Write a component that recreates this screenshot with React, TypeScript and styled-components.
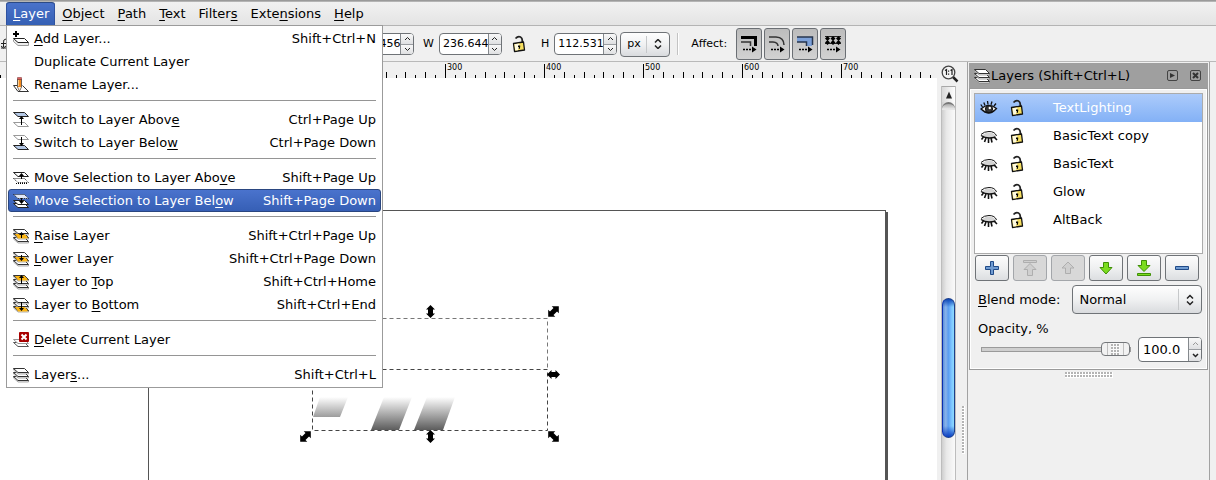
import React, { ReactNode, useEffect, useState } from "react";
import styled, { createGlobalStyle, css } from "styled-components";

const GlobalStyle = createGlobalStyle`
  * { box-sizing: border-box; }
  body {
    margin: 0;
    background: #f0f0f0;
    color: #000;
    font-family: "DejaVu Sans", sans-serif;
    font-size: 13px;
    line-height: 16px;
  }
  button, input, select { font: inherit; color: inherit; margin: 0; padding: 0; }
  svg { display: block; flex: none; }
  u { text-underline-offset: 2px; text-decoration-thickness: 1px; text-decoration-skip-ink: none; }
`;

const Window = styled.div`
  display: flex;
  flex-direction: column;
  min-height: 100vh;
  border-top: 1px solid #9a9a9a;
  overflow: hidden;
`;

const MenuBar = styled.nav`
  display: flex;
  height: 25px;
  padding: 0 6px;
  background: linear-gradient(#f1f1f1, #e4e4e4);
  border-top: 1px solid #b4b4b4;
  border-bottom: 1px solid #b4b4b4;
`;

const MenuSlot = styled.div`
  position: relative;
`;

const MenuTitle = styled.button<{ $open?: boolean }>`
  display: block;
  height: 23px;
  padding: 0 6px 0 7px;
  border: 1px solid transparent;
  border-width: 1px 0 0;
  border-radius: 3px 3px 0 0;
  background: none;
  ${(p) =>
    p.$open &&
    css`
      color: #fff;
      background: linear-gradient(#4a72ca, #3560b4);
      border-color: #2c4a85;
      box-shadow: inset 1px 0 #2f52a0, inset -1px 0 #2f52a0;
    `}
`;

const Menu = styled.div`
  position: absolute;
  top: 23px;
  left: 0;
  z-index: 5;
  width: 377px;
  padding: 1px 1px 1px;
  background: #fff;
  border: 1px solid #9b9b9b;
`;

const MenuItem = styled.button<{ $active?: boolean }>`
  display: flex;
  align-items: center;
  gap: 5px;
  width: 100%;
  height: 23px;
  padding: 0 4px;
  border: 1px solid transparent;
  border-radius: 3px;
  background: none;
  text-align: left;
  white-space: nowrap;
  ${(p) =>
    p.$active &&
    css`
      color: #fff;
      background: linear-gradient(#4a73cd, #365fb5);
      border-color: #2a4680;
    `}
`;

const ItemLabel = styled.span`
  flex: 1;
`;

const Separator = styled.hr`
  height: 1px;
  margin: 4px 5px 7px;
  border: 0;
  background: #959595;
`;

const ToolBar = styled.div`
  display: flex;
  align-items: center;
  height: 36px;
  padding-top: 1px;
  border-bottom: 1px solid #b9b9b9;
  background: #f0f0f0;
  font-size: 11px;
`;

const Field = styled.label`
  display: flex;
  align-items: center;
  gap: 5px;
`;

const Spin = styled.span<{ $large?: boolean }>`
  display: flex;
  width: ${(p) => (p.$large ? 64 : 63)}px;
  height: ${(p) => (p.$large ? 25 : 22)}px;
  border: 1px solid #6f7377;
  border-radius: 4px;
  background: #fff;
  overflow: hidden;
  font-size: ${(p) => (p.$large ? 13 : 11)}px;
  input {
    flex: 1;
    min-width: 0;
    padding-left: ${(p) => (p.$large ? 4 : 3)}px;
    border: 0;
    background: none;
    outline: 0;
  }
`;

const Steppers = styled.span`
  display: flex;
  flex-direction: column;
  width: 13px;
  border-left: 1px solid #85898d;
  background: #eee;
`;

const Stepper = styled.button`
  display: flex;
  flex: 1;
  align-items: center;
  justify-content: center;
  border: 0;
  background: linear-gradient(#f8f8f8, #dfe0e2);
  & + & { border-top: 1px solid #9a9da1; }
`;

const Drop = styled.span<{ $large?: boolean }>`
  display: flex;
  align-items: center;
  flex: ${(p) => (p.$large ? "1" : "none")};
  width: ${(p) => (p.$large ? "auto" : "50px")};
  height: ${(p) => (p.$large ? 29 : 25)}px;
  border: 1px solid #6f7377;
  border-radius: 4px;
  background: linear-gradient(#fefefe, #f0f1f2 50%, #d9dbde);
  position: relative;
  select {
    width: 100%;
    height: 100%;
    padding: 0 24px 0 6px;
    appearance: none;
    border: 0;
    background: none;
    outline: 0;
  }
`;

const DropMark = styled.span`
  position: absolute;
  right: 0;
  top: 3px;
  bottom: 3px;
  display: flex;
  align-items: center;
  padding: 0 7px;
  border-left: 1px solid #c6c8ca;
  pointer-events: none;
`;

const ToolGroup = styled.div<{ $gap: number; $before: number }>`
  display: flex;
  align-items: center;
  gap: ${(p) => p.$gap}px;
  margin-left: ${(p) => p.$before}px;
`;

const PlainButton = styled.button`
  display: flex;
  align-items: center;
  justify-content: center;
  border: 0;
  background: none;
`;

const Rule = styled.span`
  width: 2px;
  height: 22px;
  border-left: 1px solid #c3c3c3;
  border-right: 1px solid #fff;
`;

const Toggle = styled.button`
  display: flex;
  align-items: center;
  justify-content: center;
  width: 26px;
  height: 32px;
  border: 1px solid #6b6f74;
  border-radius: 3px;
  background: linear-gradient(#bcbcbc, #d2d2d2);
`;

const Main = styled.div`
  display: flex;
  flex: 1;
`;

const Editor = styled.main`
  display: flex;
  flex: 1;
  flex-direction: column;
  min-width: 0;
`;

const RulerView = styled.svg`
  width: 100%;
  height: 16px;
  font-size: 8px;
`;

const CanvasView = styled.svg`
  flex: 1;
  width: 100%;
  min-height: 400px;
  background: #fff;
`;

const ScrollColumn = styled.div`
  display: flex;
  flex-direction: column;
  width: 19px;
  padding-left: 4px;
`;

const ZoomButton = styled(PlainButton)`
  width: 18px;
  height: 24px;
`;

const Trough = styled.div`
  display: flex;
  flex: 1;
  flex-direction: column;
  border: 1px solid #bdbdbd;
  border-width: 0 1px;
  background: linear-gradient(90deg, #cfcfcf, #e9e9e9 35%, #fafafa);
`;

const ArrowButton = styled(PlainButton)`
  height: 16px;
  border-top: 1px solid #a8a8a8;
  background: linear-gradient(90deg, #d8d8d8, #fff);
`;

const TroughCap = styled.div`
  height: 8px;
  border-top: 2px solid #777;
  border-radius: 7px 7px 0 0;
  background: linear-gradient(#aaa, #e6e6e6 80%);
`;

const Thumb = styled.div`
  width: 13px;
  height: 140px;
  margin-top: 188px;
  border: 1px solid #1c3f8a;
  border-left: 1px solid #0b2fb0;
  border-radius: 7px;
  background:
    linear-gradient(#0b45b5, transparent 8px, transparent 127px, #0b3fc0),
    linear-gradient(90deg, #5b90dc, #8ab4ea 25%, #5a9cf0 48%, #79c2ff 75%, #8fdcff);
`;

const Gutter = styled.div`
  display: flex;
  align-items: flex-end;
  width: 11px;
  padding: 0 2px 26px 6px;
`;

const Dots = styled.div<{ $wide?: boolean }>`
  width: ${(p) => (p.$wide ? "48px" : "6px")};
  height: ${(p) => (p.$wide ? "6px" : "48px")};
  background:
    radial-gradient(circle at 1px 1px, #b4b4b4 1px, transparent 1px) 0 0 / 3px 3px,
    #fff;
`;

const Dock = styled.aside`
  display: flex;
  flex-direction: column;
  flex: none;
  width: 243px;
  margin-right: 6px;
  padding: 1px;
  border: 1px solid #a2a2a2;
  border-width: 0 1px;
  align-items: center;
`;

const DockPanel = styled.section`
  width: 239px;
  margin-bottom: 2px;
`;

const DockHeader = styled.header`
  display: flex;
  align-items: center;
  height: 25px;
  padding: 0 7px 0 5px;
  gap: 12px;
  background: #9f9f9f;
  h2 {
    display: flex;
    flex: 1;
    align-items: center;
    gap: 1px;
    margin: 0;
    font-size: 13px;
    font-weight: 400;
  }
`;

const DockBody = styled.div`
  display: flex;
  flex-direction: column;
  gap: 1px;
  padding: 4px 4px 7px;
  border: 1px solid #9a9a9a;
  box-shadow: inset 1px 1px #fff, inset -1px -1px #fff;
`;

const LayerList = styled.ul`
  height: 161px;
  margin: 0;
  padding: 0;
  list-style: none;
  background: #fff;
  border: 1px solid #ababab;
`;

const LayerRow = styled.li<{ $selected?: boolean }>`
  display: flex;
  align-items: center;
  height: 28px;
  padding-left: 5px;
  gap: 11px;
  ${(p) =>
    p.$selected &&
    css`
      color: #fff;
      background: linear-gradient(#accbfb, #83b1f6);
    `}
`;

const LayerName = styled.span`
  margin-left: 17px;
`;

const Actions = styled.div`
  display: flex;
  gap: 4px;
  padding: 0 1px;
`;

const ActionButton = styled.button`
  display: flex;
  align-items: center;
  justify-content: center;
  width: 34px;
  height: 26px;
  border: 1px solid #6f7377;
  border-radius: 3px;
  background: linear-gradient(#fcfcfc, #eff0f1 50%, #dcdee1);
  &:disabled {
    border-color: #a3a6aa;
    background: #d8d8d8;
  }
`;

const BlendRow = styled.label`
  display: flex;
  align-items: center;
  gap: 12px;
  margin-top: 3px;
  padding: 0 1px 0 4px;
`;

const OpacityLabel = styled.label`
  padding: 6px 0 0 4px;
  line-height: 15px;
`;

const OpacityRow = styled.div`
  display: flex;
  align-items: center;
  gap: 7px;
  padding: 0 1px 0 7px;
`;

const Slider = styled.input`
  flex: 1;
  min-width: 0;
  height: 14px;
  appearance: none;
  background: none;
  &::-webkit-slider-runnable-track {
    height: 5px;
    border: 1px solid #9a9a9a;
    background: #cfcfcf;
  }
  &::-webkit-slider-thumb {
    appearance: none;
    width: 29px;
    height: 14px;
    margin-top: -6px;
    border: 1px solid #74777a;
    border-radius: 4px;
    background:
      linear-gradient(90deg, #f2f2f2 0 5px, #c0c0c0 5px 6px, #f2f2f2 6px 9px, transparent 9px 18px, #f2f2f2 18px 21px, #c0c0c0 21px 22px, #f2f2f2 22px),
      radial-gradient(circle at 1px 1px, #b4b4b4 1px, transparent 1px) 0 1px / 3px 3px,
      #fafafa;
  }
`;

/* ---------- icons ---------- */

function Sheet({ y, fill = "#fff", stroke = "#222", dash }: { y: number; fill?: string; stroke?: string; dash?: string }) {
  return (
    <path
      d={`M0.500 ${y + 0.5}H11.5L15.5 ${y + 4.5}H5Z`}
      fill={fill}
      stroke={stroke}
      strokeDasharray={dash}
      strokeLinejoin="round"
    />
  );
}

function Arrow({ up, y, long = 6 }: { up?: boolean; y: number; long?: number }) {
  return up ? (
    <path d={`M8 ${y + long}V${y + 3}H6L8.500 ${y}L11 ${y + 3}H9V${y + long}Z`} fill="#000" />
  ) : (
    <path d={`M8 ${y}V${y + long - 3}H6L8.500 ${y + long}L11 ${y + long - 3}H9V${y}Z`} fill="#000" />
  );
}

/* Three stacked sheets, from the bottom one (0) to the top one (2); "hot" is the gold one. */
function Stack({ hot }: { hot?: number }) {
  const tops = [9, 5, 1];
  return (
    <>
      {tops.map((y, i) => (
        <g key={y}>
          <path d={`M0.500 ${y + 0.5}V${y + 2}L5 ${y + 6}H15.5V${y + 4.5}`} fill="#eee" stroke="#777" strokeWidth="0.600" />
          <Sheet y={y} fill={i === hot ? "#fcb514" : "#fff"} stroke="#333" />
        </g>
      ))}
      {hot !== undefined && <path d={`M2.500 ${tops[hot] + 1}H11.5L14.5 ${tops[hot] + 4}V${tops[hot] + 5.5}H5Z`} fill="#fcb514" />}
    </>
  );
}

type IconName = "add" | "none" | "rename" | "swUp" | "swDown" | "mvUp" | "mvDown" | "raise" | "lower" | "top" | "bottom" | "delete" | "layers";

function MenuIcon({ name }: { name: IconName }) {
  const art: Record<IconName, ReactNode> = {
    none: null,
    add: (
      <>
        <path d="M0.500 8.500V10.500L5 14.500H15.5V11.500" fill="#eee" stroke="#999" />
        <Sheet y={7} />
        <path d="M3 0V6M0 3H6" stroke="#000" strokeWidth="2" />
      </>
    ),
    rename: (
      <>
        <path d="M4 8.500H0.500L5 14.500H15.5L9.500 8.500" fill="#fff" stroke="#333" />
        <path d="M4.500 2V10L6.500 14L8.500 10V2Z" fill="#f58a1f" stroke="#444" strokeWidth="0.800" />
        <path d="M5.500 3V9" stroke="#ffd08a" />
        <path d="M5 10H8L6.500 13.500Z" fill="#eee" />
        <path d="M4.500 0.500H8.500V2.500H4.500Z" fill="#e06060" stroke="#733" strokeWidth="0.500" />
      </>
    ),
    swUp: (
      <>
        <Sheet y={10} stroke="#999" />
        <Sheet y={0} fill="#b4c8e6" />
        <Arrow up y={4} long={9} />
      </>
    ),
    swDown: (
      <>
        <Sheet y={0} stroke="#999" />
        <Sheet y={10} fill="#b4c8e6" />
        <Arrow y={2} long={9} />
      </>
    ),
    mvUp: (
      <>
        <Sheet y={8} fill="none" dash="1 1" />
        <path d="M3 13.500H15" stroke="#000" strokeDasharray="1 1" />
        <Sheet y={2} />
        <Arrow up y={3} />
      </>
    ),
    mvDown: (
      <>
        <Sheet y={10} />
        <Sheet y={7} />
        <Sheet y={1} fill="#dfe6f5" dash="1 1" />
        <Arrow y={5} />
      </>
    ),
    raise: (
      <>
        <Stack hot={1} />
        <Arrow up y={4} />
      </>
    ),
    lower: (
      <>
        <Stack hot={1} />
        <Arrow y={4} />
      </>
    ),
    top: (
      <>
        <Stack hot={2} />
        <Arrow up y={1} long={9} />
      </>
    ),
    bottom: (
      <>
        <Stack hot={0} />
        <Arrow y={5} long={9} />
      </>
    ),
    delete: (
      <>
        <Sheet y={10} stroke="#555" />
        <Sheet y={7} stroke="#999" />
        <rect x="6" y="0" width="10" height="10" rx="1" fill="#a80000" />
        <path d="M8.500 2.500L13.500 7.500M13.500 2.500L8.500 7.500" stroke="#fff" strokeWidth="2" />
      </>
    ),
    layers: <Stack />,
  };
  return (
    <svg width="16" height="16" viewBox="0 0 16 16" aria-hidden="true">
      {art[name]}
    </svg>
  );
}

function LockIcon() {
  return (
    <svg width="16" height="18" viewBox="0 0 16 18" aria-hidden="true">
      <path d="M4.500 3.500Q7 0.800 9.500 2Q11.500 3 11.300 6L11.500 9" fill="none" stroke="#222" strokeWidth="1.800" />
      <path d="M2.500 8.500L12.500 7L13.500 15L3.500 16.500Z" fill="#f7df60" stroke="#111" strokeWidth="1.300" strokeLinejoin="round" />
      <path d="M3.500 9.300L8.500 8.500L7 15.200L4.400 15.400Z" fill="#fffbe0" />
      <path d="M7 10.500H9.200V12L8.600 14H7.800V12H7Z" fill="#000" />
    </svg>
  );
}

function EyeIcon({ open }: { open?: boolean }) {
  return (
    <svg width="18" height="16" viewBox="0 0 18 16" aria-hidden="true" fill="none" stroke="#111">
      {open ? (
        <>
          <path d="M1 9Q8.500 2 16.500 8.500Q9 16.500 1 9Z" fill="#eee" strokeWidth="1.300" />
          <circle cx="9" cy="9" r="3.600" fill="#333" />
          <circle cx="9.800" cy="8" r="1.200" fill="#fff" stroke="none" />
          <path d="M2.500 7L0.800 4.500M5 5.500L3.800 2.500M8 4.500L7.500 1M11 4.700L12 1.500M14 6L16 3.500M4 11.500Q9 15 14 11" strokeWidth="1.300" />
        </>
      ) : (
        <>
          <path d="M1 6.500Q4 3.500 9 3.500Q15 3.500 16.500 8" strokeWidth="1" />
          <path d="M2.500 7Q5 4.500 9 4.500Q14 4.500 15.500 8Q9 11.500 2.500 8Z" fill="#d4d4d4" stroke="none" />
          <path d="M1 7.500Q7 11.500 15.500 9" strokeWidth="1.500" />
          <path d="M3.500 9L1.500 11.500M6 10L4.500 14M8.500 10V15M11 10L12 14.500M14 9L17 12" strokeWidth="1.600" />
        </>
      )}
    </svg>
  );
}

function Chevrons({ large }: { large?: boolean }) {
  return (
    <svg width="8" height={large ? 12 : 10} viewBox={large ? "0 0 8 12" : "0 1 8 10"} aria-hidden="true" fill="none" stroke="#222" strokeWidth="1.500">
      <path d="M1 4.500L4 1.500L7 4.500M1 7.500L4 10.500L7 7.500" />
    </svg>
  );
}

function Affix({ kind }: { kind: number }) {
  return (
    <svg width="18" height="18" viewBox="0 0 18 18" aria-hidden="true" fill="none" stroke="#000">
      {kind === 0 && <path d="M1 2.500H15.500V11" strokeWidth="3" />}
      {kind === 0 && <path d="M1 7H10.500V11" strokeWidth="1.500" stroke="#333" />}
      {kind === 1 && <path d="M1 2H8Q16 2.500 16 10M1 7H5Q10 7.500 10 11" strokeWidth="1.500" stroke="#333" />}
      {kind === 2 && <path d="M1 2H16V11H11V7H1Z" fill="#7ca0d8" stroke="none" />}
      {kind === 2 && <path d="M1 2H16.500V10M1 7H10.500V11" strokeWidth="1.500" stroke="#27364f" />}
      {kind === 3 && (
        <>
          <path d="M1 1.500H17M1 8.500H17" stroke="#222" />
          <path d="M3.500 1L6 3.500L3.500 6L1 3.500ZM9 1L11.500 3.500L9 6L6.500 3.500ZM14.500 1L17 3.500L14.500 6L12 3.500Z" fill="#000" stroke="none" />
          <path d="M3.500 5L6 7.500L3.500 10L1 7.500ZM9 5L11.500 7.500L9 10L6.500 7.500ZM14.500 5L17 7.500L14.500 10L12 7.500Z" fill="#000" stroke="none" />
        </>
      )}
      <path d="M3 14.500H12" strokeDasharray="2 1" strokeWidth="1.500" />
      <path d="M12 11.500L16.500 14.500L12 17.500Z" fill="#000" stroke="none" />
    </svg>
  );
}

function ActionIcon({ kind }: { kind: string }) {
  const gray = kind === "top" || kind === "up";
  const blue = kind === "add" || kind === "remove";
  const paths: Record<string, string> = {
    add: "M6.500 1.500H9.500V6.500H14.500V9.500H9.500V14.500H6.500V9.500H1.500V6.500H6.500Z",
    remove: "M1.500 6.500H14.500V9.500H1.500Z",
    up: "M8 2L14 8H10.500V13.500H5.500V8H2Z",
    top: "M1.500 0.500H14.500V2.500H1.500ZM8 3.500L14 9.500H10.500V15.500H5.500V9.500H2Z",
    down: "M5.500 2.500H10.500V7.500H14L8 14L2 7.500H5.500Z",
    bottom: "M5.500 0.500H10.500V5.500H14L8 11.500L2 5.500H5.500ZM1.500 13.500H14.500V15.500H1.500Z",
  };
  return (
    <svg width="16" height="16" viewBox="0 0 16 16" aria-hidden="true">
      <path
        d={paths[kind]}
        fill={gray ? "#cfcfcf" : blue ? "#6f9bd1" : "#7bdc1f"}
        stroke={gray ? "#aeaeae" : blue ? "#204a87" : "#3f8f06"}
      />
    </svg>
  );
}

/* ---------- parts ---------- */

/* Underlines the mnemonic letter that follows "_" in a label. */
function Mnemonic({ text }: { text: string }) {
  const i = text.indexOf("_");
  if (i < 0) return <>{text}</>;
  return (
    <>
      {text.slice(0, i)}
      <u>{text[i + 1]}</u>
      {text.slice(i + 2)}
    </>
  );
}

function SpinBox({ label, value, large }: { label: string; value: string; large?: boolean }) {
  return (
    <Spin $large={large}>
      <input aria-label={label} defaultValue={value} />
      <Steppers>
        {[true, false].map((up) => (
          <Stepper key={String(up)} aria-label={`${up ? "Increase" : "Decrease"} ${label}`}>
            <svg width="7" height="5" viewBox="0 0 7 5" fill="none" stroke={large && up ? "#999" : "#222"} strokeWidth={large && !up ? 1.5 : 1}>
              <path d={up ? "M1 4L3.500 1.500L6 4" : "M1 1L3.500 3.500L6 1"} />
            </svg>
          </Stepper>
        ))}
      </Steppers>
    </Spin>
  );
}

type Entry = [IconName, string, string, boolean?] | null;
const entries: Entry[] = [
  ["add", "_Add Layer...", "Shift+Ctrl+N"],
  ["none", "Duplicate Current Layer", ""],
  ["rename", "Re_name Layer...", ""],
  null,
  ["swUp", "Switch to Layer Abov_e", "Ctrl+Page Up"],
  ["swDown", "Switch to Layer Belo_w", "Ctrl+Page Down"],
  null,
  ["mvUp", "Move Selection to Layer Abo_ve", "Shift+Page Up"],
  ["mvDown", "Move Selection to Layer Bel_ow", "Shift+Page Down", true],
  null,
  ["raise", "_Raise Layer", "Shift+Ctrl+Page Up"],
  ["lower", "_Lower Layer", "Shift+Ctrl+Page Down"],
  ["top", "Layer to _Top", "Shift+Ctrl+Home"],
  ["bottom", "Layer to _Bottom", "Shift+Ctrl+End"],
  null,
  ["delete", "_Delete Current Layer", ""],
  null,
  ["layers", "Layer_s...", "Shift+Ctrl+L"],
];

const titles = ["_Layer", "_Object", "_Path", "_Text", "Filter_s", "Exte_nsions", "_Help"];

const SIDE_WIDTH = 285;

function Ruler() {
  const [width, setWidth] = useState(window.innerWidth);
  useEffect(() => {
    const update = () => setWidth(window.innerWidth);
    window.addEventListener("resize", update);
    return () => window.removeEventListener("resize", update);
  }, []);
  const count = Math.max(0, Math.floor((width - SIDE_WIDTH) / 9.9) + 1);
  const ticks = Array.from({ length: count }, (_, n) => n - 45);
  return (
    <RulerView aria-hidden="true">
      {ticks.map((n) => {
        const x = Math.round(445 + n * 9.9);
        const h = n % 10 === 0 ? 14 : n % 2 === 0 ? 6 : 3;
        return (
          <g key={n}>
            <rect x={x} y={16 - h} width="1" height={h} />
            {n % 10 === 0 && n >= 0 && (
              <text x={x + 2} y="8">
                {300 + n * 10}
              </text>
            )}
          </g>
        );
      })}
    </RulerView>
  );
}

function Handle({ x, y, angle }: { x: number; y: number; angle: number }) {
  const diagonal = Math.abs(angle) === 45;
  return (
    <path
      transform={`translate(${x} ${y}) rotate(${angle})`}
      d={diagonal ? "M0 -7.500L5 -2.500H2.500V2.500H5L0 7.500L-5 2.500H-2.500V-2.500H-5Z" : "M0 -6.500L4.500 -2H2.500V2H4.500L0 6.500L-4.500 2H-2.500V-2H-4.500Z"}
    />
  );
}

function Canvas() {
  return (
    <CanvasView role="img" aria-label="Drawing">
      <defs>
        <linearGradient id="fade" x1="0" y1="319" x2="0" y2="352" gradientUnits="userSpaceOnUse">
          <stop offset="0" stopColor="#fff" />
          <stop offset="1" stopColor="#5c5c5c" />
        </linearGradient>
      </defs>
      <path d="M148.500 1000V132.500H886" fill="none" stroke="#555" />
      <rect x="885" y="132" width="1" height="900" fill="#555" />
      <rect x="886" y="134" width="2" height="900" fill="#555" />
      <g fill="url(#fade)">
        <path d="M320 319H348L340 339H313Z" />
        <path d="M384 319H412L399 352H371Z" />
        <path d="M427 319H455L443 352H414Z" />
      </g>
      <g fill="none" strokeDasharray="4 3">
        <path d="M312.500 240.500H547.500V291" stroke="#777" />
        <path d="M312.500 291.500H547.500V352.500M312.500 291.500V352.500H547.500" stroke="#444" />
      </g>
      <Handle x={430.5} y={233.5} angle={0} />
      <Handle x={553.5} y={233.5} angle={45} />
      <Handle x={553.5} y={296.5} angle={90} />
      <Handle x={553.5} y={358.5} angle={-45} />
      <Handle x={430.5} y={358.5} angle={0} />
      <Handle x={305.5} y={358.5} angle={45} />
    </CanvasView>
  );
}

const layers = ["TextLighting", "BasicText copy", "BasicText", "Glow", "AltBack"];
const actions: [string, string, boolean?][] = [
  ["add", "Create layer"],
  ["top", "Raise to top", true],
  ["up", "Raise", true],
  ["down", "Lower"],
  ["bottom", "Lower to bottom"],
  ["remove", "Delete layer"],
];

export default function App() {
  const [opacity, setOpacity] = useState(100);
  return (
    <Window>
      <GlobalStyle />
      <MenuBar>
        {titles.map((t, i) => (
          <MenuSlot key={t}>
            <MenuTitle $open={i === 0} aria-haspopup="menu" aria-expanded={i === 0}>
              <Mnemonic text={t} />
            </MenuTitle>
            {i === 0 && (
              <Menu role="menu">
                {entries.map((e, n) =>
                  e ? (
                    <MenuItem key={n} role="menuitem" $active={e[3]}>
                      <MenuIcon name={e[0]} />
                      <ItemLabel>
                        <Mnemonic text={e[1]} />
                      </ItemLabel>
                      <span>{e[2]}</span>
                    </MenuItem>
                  ) : (
                    <Separator key={n} />
                  )
                )}
              </Menu>
            )}
          </MenuSlot>
        ))}
      </MenuBar>

      <ToolBar>
        <PlainButton aria-label="Rotate">
          <svg width="8" height="14" viewBox="0 0 8 14" fill="none" stroke="#222">
            <path d="M6 2Q3 2 3.500 6V10M1 6.500H6M1 11H7M1 9L3.500 11L6 9" />
          </svg>
        </PlainButton>
        <ToolGroup $gap={9} $before={343}>
          <SpinBox label="Y" value="292.456" />
          <Field>
            W <SpinBox label="Width" value="236.644" />
          </Field>
          <PlainButton aria-label="Lock proportions">
            <LockIcon />
          </PlainButton>
        </ToolGroup>
        <ToolGroup $gap={3} $before={14}>
          <Field>
            H <SpinBox label="Height" value="112.531" />
          </Field>
          <Drop>
            <select aria-label="Unit">
              <option>px</option>
            </select>
            <DropMark>
              <Chevrons />
            </DropMark>
          </Drop>
        </ToolGroup>
        <ToolGroup $gap={12} $before={7}>
          <Rule />
          <span>Affect:</span>
        </ToolGroup>
        <ToolGroup $gap={2} $before={9}>
          {["Scale stroke width", "Scale rounded corners", "Move gradients", "Move patterns"].map((l, i) => (
            <Toggle key={l} aria-label={l} aria-pressed="true">
              <Affix kind={i} />
            </Toggle>
          ))}
        </ToolGroup>
      </ToolBar>

      <Main>
        <Editor>
          <Ruler />
          <Canvas />
        </Editor>
        <ScrollColumn>
          <ZoomButton aria-label="Zoom 1:1">
            <svg width="18" height="18" viewBox="0 0 18 18" aria-hidden="true">
              <path d="M12 12L16.500 16.500" stroke="#222" strokeWidth="2.500" />
              <circle cx="7.500" cy="7.500" r="6.300" fill="#f4f4f4" stroke="#444" strokeWidth="1.300" />
              <path d="M4 5.500L5.500 4.500V10M9.500 5.500L11 4.500V10" fill="none" stroke="#222" strokeWidth="1.200" />
              <path d="M7 5.500H8.200V6.700H7ZM7 8.500H8.200V9.700H7Z" fill="#222" />
            </svg>
          </ZoomButton>
          <Trough>
            <ArrowButton aria-label="Scroll up">
              <svg width="8" height="8" viewBox="0 0 8 8" aria-hidden="true">
                <path d="M4 0.500L7 7.500H1Z" fill="#222" />
              </svg>
            </ArrowButton>
            <TroughCap />
            <Thumb />
          </Trough>
        </ScrollColumn>
        <Gutter>
          <Dots />
        </Gutter>
        <Dock>
          <DockPanel>
            <DockHeader>
              <h2>
                <MenuIcon name="layers" />
                Layers (Shift+Ctrl+L)
              </h2>
              <PlainButton aria-label="Iconify">
                <svg width="11" height="11" viewBox="0 0 11 11">
                  <rect x="0.500" y="0.500" width="10" height="10" rx="1.500" fill="none" stroke="#444" />
                  <path d="M3 3L8 5.500L3 8Z" fill="#333" />
                </svg>
              </PlainButton>
              <PlainButton aria-label="Close">
                <svg width="11" height="11" viewBox="0 0 11 11">
                  <rect x="0.500" y="0.500" width="10" height="10" rx="1.500" fill="none" stroke="#444" />
                  <path d="M3 3L8 8M8 3L3 8" stroke="#333" strokeWidth="2" />
                </svg>
              </PlainButton>
            </DockHeader>
            <DockBody>
              <LayerList>
                {layers.map((l, i) => (
                  <LayerRow key={l} $selected={i === 0}>
                    <PlainButton aria-label={`Toggle visibility of ${l}`}>
                      <EyeIcon open={i === 0} />
                    </PlainButton>
                    <PlainButton aria-label={`Lock ${l}`}>
                      <LockIcon />
                    </PlainButton>
                    <LayerName>{l}</LayerName>
                  </LayerRow>
                ))}
              </LayerList>
              <Actions>
                {actions.map(([kind, label, off]) => (
                  <ActionButton key={kind} aria-label={label} disabled={off}>
                    <ActionIcon kind={kind} />
                  </ActionButton>
                ))}
              </Actions>
              <BlendRow>
                <span>
                  <Mnemonic text="_Blend mode:" />
                </span>
                <Drop $large>
                  <select>
                    <option>Normal</option>
                  </select>
                  <DropMark>
                    <Chevrons large />
                  </DropMark>
                </Drop>
              </BlendRow>
              <OpacityLabel htmlFor="opacity">Opacity, %</OpacityLabel>
              <OpacityRow>
                <Slider id="opacity" type="range" min="0" max="100" value={opacity} onChange={(e) => setOpacity(Number(e.target.value))} />
                <SpinBox key={opacity} label="opacity" value={opacity.toFixed(1)} large />
              </OpacityRow>
            </DockBody>
          </DockPanel>
          <Dots $wide />
        </Dock>
      </Main>
    </Window>
  );
}
